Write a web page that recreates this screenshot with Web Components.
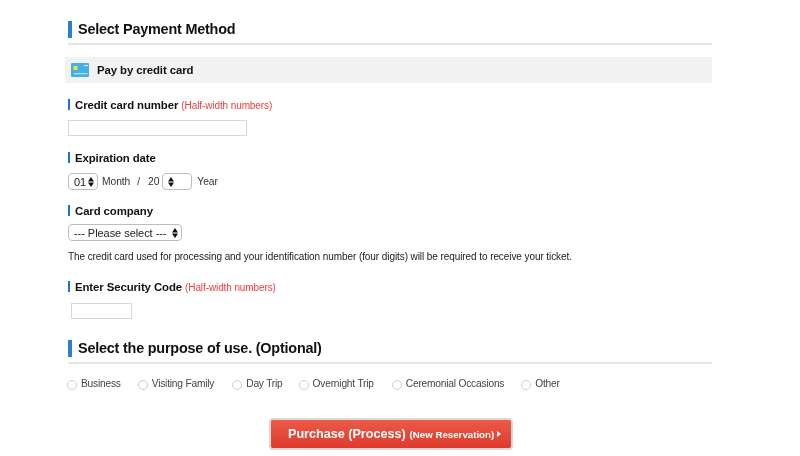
<!DOCTYPE html>
<html lang="en">
<head>
<meta charset="utf-8">
<title>Select Payment Method</title>
<style>
  html, body { margin: 0; background: #fff; }
  body { font-family: "Liberation Sans", Arial, sans-serif; color: #222; overflow: hidden; height: 456px; }
  payment-page { width: 644px; margin-left: 68px; filter: blur(0.3px); }
</style>
</head>
<body>
<payment-page>
  <section-title style="margin-top:21px">Select Payment Method</section-title>
  <method-band>Pay by credit card</method-band>

  <field-label style="margin-top:16px">Credit card number <span slot="note">(Half-width numbers)</span></field-label>
  <text-box style="width:179px;margin-top:10px"></text-box>

  <field-label style="margin-top:16px">Expiration date</field-label>
  <expiry-row style="margin-top:10px"></expiry-row>

  <field-label style="margin-top:15px">Card company</field-label>
  <fake-select style="width:114px;margin-top:8px">--- Please select ---</fake-select>
  <p-note>The credit card used for processing and your identification number (four digits) will be required to receive your ticket.</p-note>

  <field-label style="margin-top:18px">Enter Security Code <span slot="note">(Half-width numbers)</span></field-label>
  <text-box style="width:61px;margin:11px 0 0 3px"></text-box>

  <section-title style="margin-top:21px">Select the purpose of use. (Optional)</section-title>
  <purpose-row></purpose-row>
  <buy-button></buy-button>
</payment-page>

<script>
function shadow(el, html) {
  el.attachShadow({mode: "open"}).innerHTML = html;
}

class PaymentPage extends HTMLElement {
  constructor() {
    super();
    shadow(this, `<style>:host { display: flow-root; }</style><slot></slot>`);
  }
}

class SectionTitle extends HTMLElement {
  constructor() {
    super();
    shadow(this, `<style>
      :host { display: block; border-bottom: 2px solid #e6e6e6; padding-bottom: 5px; }
      div { border-left: 4px solid #2f7fd0; padding-left: 6px; height: 17px;
        font: bold 14.4px/17px "Liberation Sans", Arial, sans-serif; letter-spacing: -0.2px; color: #111; }
    </style><div><slot></slot></div>`);
  }
}

class MethodBand extends HTMLElement {
  constructor() {
    super();
    shadow(this, `<style>
      :host { display: flex; align-items: center; gap: 8px; margin: 12px 0 0 -3px; height: 26px;
        padding-left: 6px; background: #f2f2f2; font: bold 11.4px "Liberation Sans", Arial, sans-serif; letter-spacing: -0.1px; color: #111; }
      svg { display: block; }
    </style>
    <svg width="18" height="14" viewBox="0 0 18 14">
      <rect width="18" height="14" rx="1" fill="#45b0e6"/>
      <rect x="2.5" y="3" width="4" height="4" fill="#f2d94e"/>
      <rect x="13" y="2" width="4" height="1.2" fill="#cdeafa"/>
      <path d="M3 10.6H16.5" stroke="#d8f0fb" stroke-width="1.4" stroke-dasharray="1.6 .5"/>
    </svg><slot></slot>`);
  }
}

class FieldLabel extends HTMLElement {
  constructor() {
    super();
    shadow(this, `<style>
      :host { display: block; border-left: 2px solid #2273cf; padding-left: 5px; height: 11px;
        font: bold 11.4px/13px "Liberation Sans", Arial, sans-serif; letter-spacing: -0.1px; color: #111; }
      ::slotted([slot=note]) { font-weight: normal; font-size: 10px; letter-spacing: -0.1px; color: #f23c3c; }
    </style><slot></slot> <slot name="note"></slot>`);
  }
}

class TextBox extends HTMLElement {
  constructor() {
    super();
    shadow(this, `<style>
      :host { display: block; box-sizing: border-box; height: 16px; border: 1px solid #d8d8d8; background: #fff; }
    </style>`);
  }
}

class FakeSelect extends HTMLElement {
  constructor() {
    super();
    shadow(this, `<style>
      :host { display: inline-flex; box-sizing: border-box; height: 17px; align-items: center;
        justify-content: space-between; padding: 0 3px 0 5px; border: 1px solid #bdbdbd; border-radius: 4px;
        background: #fff; font: 11px "Liberation Sans", Arial, sans-serif; letter-spacing: -0.05px; color: #222; vertical-align: middle; }
      svg { display: block; flex: none; }
    </style><slot></slot>
    <svg width="6" height="10" viewBox="0 0 6 10"><path d="M3 0 6 4.4H0zM3 10 0 5.6H6z" fill="#111"/></svg>`);
  }
}

class ExpiryRow extends HTMLElement {
  constructor() {
    super();
    shadow(this, `<style>
      :host { display: flex; align-items: center; height: 17px;
        font: 10.3px "Liberation Sans", Arial, sans-serif; letter-spacing: -0.08px; color: #333; }
    </style>
    <fake-select style="width:30px">01</fake-select>
    <span style="margin-left:4px">Month</span>
    <span style="margin-left:7px">/</span>
    <span style="margin-left:8px">20</span>
    <fake-select style="width:30px;margin-left:3px"></fake-select>
    <span style="margin-left:5px">Year</span>`);
  }
}

class PNote extends HTMLElement {
  constructor() {
    super();
    shadow(this, `<style>
      :host { display: block; margin-top: 10px; font: 10px/12px "Liberation Sans", Arial, sans-serif; letter-spacing: -0.08px; color: #222; }
    </style><slot></slot>`);
  }
}

class PurposeRow extends HTMLElement {
  constructor() {
    super();
    const items = [["Business", -1], ["Visiting Family", 17], ["Day Trip", 18], ["Overnight Trip", 16], ["Ceremonial Occasions", 18], ["Other", 17]];
    shadow(this, `<style>
      :host { display: flex; margin-top: 14px; height: 14px; font: 10.2px/12px "Liberation Sans", Arial, sans-serif; letter-spacing: -0.2px; color: #444; }
      label { display: flex; gap: 4px; }
      i { display: block; box-sizing: border-box; width: 10px; height: 10px; margin-top: 2px; border: 1px solid #cfcfcf; border-radius: 50%; background: #fff; }
    </style>` + items.map(([t, m]) => `<label style="margin-left:${m}px"><i></i><span>${t}</span></label>`).join(""));
  }
}

class BuyButton extends HTMLElement {
  constructor() {
    super();
    shadow(this, `<style>
      :host { display: flex; align-items: center; box-sizing: border-box; width: 244px; height: 32px; margin: 26px 0 0 201px;
        padding-left: 17px; gap: 3px; border: 2px solid #dcd6d6; border-radius: 4px;
        background: linear-gradient(#ec5a48, #de3a2c); font: bold 12.6px "Liberation Sans", Arial, sans-serif; color: #fff; }
      small { font-size: 9.7px; margin-left: 1px; }
      svg { display: block; }
    </style><span>Purchase (Process)</span><small>(New Reservation)</small>
    <svg width="4" height="6" viewBox="0 0 4 6"><path d="M0 0 4 3 0 6z" fill="#fff"/></svg>`);
  }
}

customElements.define("payment-page", PaymentPage);
customElements.define("section-title", SectionTitle);
customElements.define("method-band", MethodBand);
customElements.define("field-label", FieldLabel);
customElements.define("text-box", TextBox);
customElements.define("fake-select", FakeSelect);
customElements.define("expiry-row", ExpiryRow);
customElements.define("p-note", PNote);
customElements.define("purpose-row", PurposeRow);
customElements.define("buy-button", BuyButton);
</script>
</body>
</html>
